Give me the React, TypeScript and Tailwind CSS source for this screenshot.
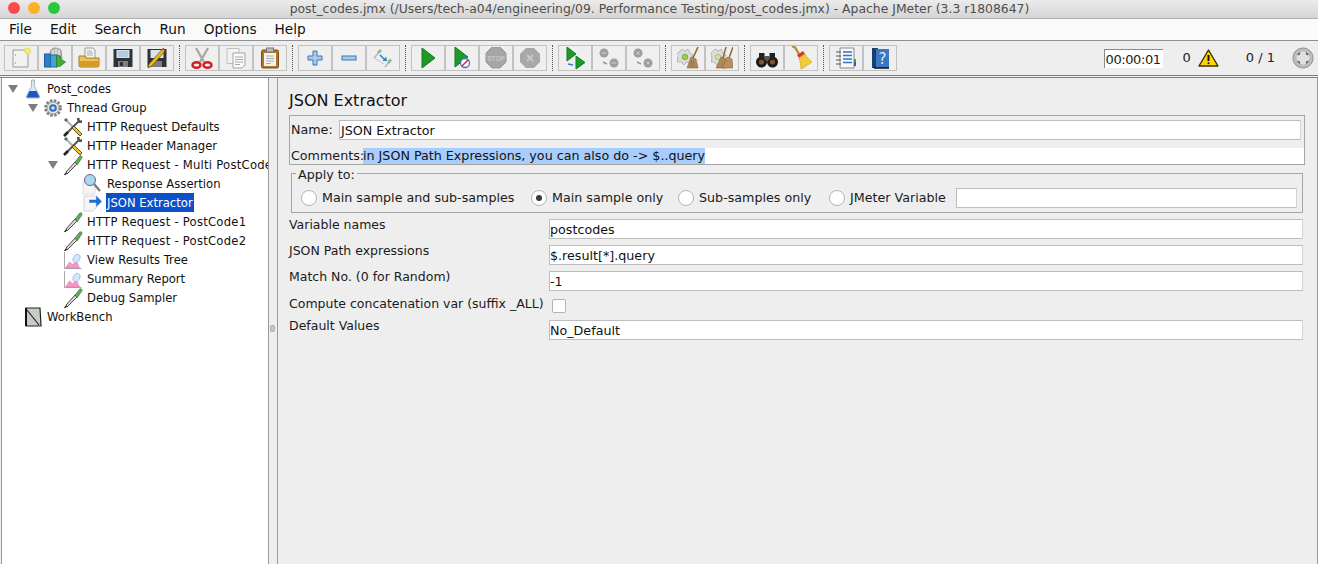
import React from "react";

const F = { fontFamily: '"DejaVu Sans", Verdana, sans-serif' };

type C = { children?: React.ReactNode };
const S = ({ children, w = 22, h = 22 }: C & { w?: number; h?: number }) => (
  <svg width={w} height={h} viewBox={`0 0 ${w} ${h}`} className="block shrink-0">{children}</svg>
);

const New = () => <S><path d="M3 3h13l2 2v15H3z" fill="#f2f2f0" stroke="#9a9a9a" /><circle cx="17.500" cy="4" r="3" fill="#f8e77f" stroke="#e6d04f" strokeWidth=".7" /><circle cx="5.500" cy="8" r=".7" fill="#999" /><circle cx="5.500" cy="16" r=".7" fill="#999" /></S>;
const Templates = () => <S><path d="M6 7c0-5 3-6 5-6s5 1 6 2l1 9H6z" fill="#bdbdbd" stroke="#8a8a8a" strokeWidth=".8" /><path d="M9 3v5M12 2v6M15 3v5" stroke="#eee" /><rect x="0.500" y="7" width="6" height="13" fill="#2f7fc8" stroke="#1c5d99" /><rect x="6.500" y="8" width="6" height="12" fill="#48a0dc" stroke="#1c6d99" /><path d="M12.500 8l4 1v3l5 3-5 4-4 1z" fill="#3fae3a" stroke="#2b7d28" strokeWidth=".8" /></S>;
const Open = () => <S><path d="M7 1h8l2 2v9H7z" fill="#f5f5f5" stroke="#999" /><path d="M9 4h5M9 6h6M9 8h6" stroke="#aaa" /><path d="M1 9h6l1 2h13v8l-1 1H2l-1-1z" fill="#eec15b" stroke="#a87a1c" /><path d="M1.500 14h19v5.500h-19z" fill="#d69c2a" /></S>;
const Save = () => <S><path d="M1.500 2h19v18h-19z" fill="#2f3236" /><rect x="4.500" y="3" width="13" height="8" fill="#cfe0f2" /><path d="M6 5h10M6 7h10M6 9h10" stroke="#7f9fc0" strokeWidth=".7" /><rect x="6" y="14" width="10" height="6" fill="#7c8086" /><rect x="8" y="15" width="3" height="4" fill="#2f3236" /></S>;
const SaveAs = () => <S><path d="M1.500 2h19v18h-19z" fill="#2f3236" /><rect x="4.500" y="3" width="13" height="8" fill="#d8e4ef" /><rect x="6" y="14" width="10" height="6" fill="#7c8086" /><path d="M19 4L6 19l-4 2 1-4L17 1.500z" fill="#eeb71e" stroke="#6a4a05" strokeWidth=".7" /><path d="M17 1.500l2.200 2.300" stroke="#c22" strokeWidth="1.600" /></S>;
const Cut = () => <S><path d="M5 1l8 14M17 1L9 15" stroke="#a9a9a9" strokeWidth="2.400" /><ellipse cx="5.500" cy="18" rx="4" ry="2.800" fill="none" stroke="#d21f1f" strokeWidth="2.400" /><ellipse cx="16.500" cy="18" rx="4" ry="2.800" fill="none" stroke="#d21f1f" strokeWidth="2.400" /></S>;
const Copy = () => <S><path d="M2 1.500h12v15H2z" fill="#f2f2f2" stroke="#c0c0c0" /><path d="M8 6h12v12l-3 3H8z" fill="#f9f9f9" stroke="#a5a5a5" /><path d="M10 10h8M10 12.500h8M10 15h8M10 17.500h5" stroke="#a9a9a9" /></S>;
const Paste = () => <S><rect x="2.500" y="3" width="17" height="18" rx="1.500" fill="#b07526" stroke="#7b4c14" /><rect x="5" y="6" width="12" height="13" fill="#f4f4f4" /><rect x="7.500" y="1" width="7" height="4" fill="#bcbcbc" stroke="#777" /><path d="M7 9h8M7 11.500h8M7 14h8M7 16.500h5" stroke="#aaa" /></S>;
const Plus = () => <S><path d="M9 4h4v5h5v4h-5v5H9v-5H4V9h5z" fill="#a9c9ec" stroke="#3f74b2" /></S>;
const Minus = () => <S><rect x="4" y="9" width="14" height="4" fill="#a9c9ec" stroke="#3f74b2" /></S>;
const Toggle = () => <S><path d="M2 11l6-7" stroke="#bcbcbc" strokeWidth="1.800" /><path d="M6 6l3-3" stroke="#8fbf85" strokeWidth="2.800" /><path d="M13 20l5-6" stroke="#bcbcbc" strokeWidth="1.800" /><path d="M16 16l3-3.500" stroke="#8fbf85" strokeWidth="2.800" /><path d="M2 11l10 6" stroke="#aab" strokeWidth=".7" /><path d="M8 8l4 4" stroke="#2f7fd0" strokeWidth="1.600" /><path d="M10.500 14l4.500 0-1-4.500z" fill="#2f7fd0" /></S>;
const Play = () => <S><path d="M5 1l13 10L5 21z" fill="#1d9a27" stroke="#137a1c" /></S>;
const PlayNo = () => <S><path d="M4 0l13 10L4 20z" fill="#1d9a27" stroke="#137a1c" /><circle cx="14" cy="16" r="4.500" fill="#fff" stroke="#3f74d2" strokeWidth="1.300" /><path d="M11 19l6-6" stroke="#d22" strokeWidth="1.400" /></S>;
const Stop = () => <S><path d="M7 0h8l6 6v9l-6 6H7l-6-6V6z" fill="#a6a6a6" stroke="#9a9a9a" /><text x="11" y="13.500" textAnchor="middle" fontSize="6.500" fontWeight="700" fill="#c6c6c6" fontFamily="Liberation Sans">STOP</text></S>;
const Shut = () => <S><path d="M7 1h8l6 6v8l-6 6H7l-6-6V7z" fill="#a8a8a8" /><path d="M8 8l6 6M14 8l-6 6" stroke="#c8c8c8" strokeWidth="2" /></S>;
const RemoteStart = () => <S><path d="M3 0l9 7-9 7z" fill="#1d9a27" stroke="#137a1c" /><path d="M12 9l9 6.500-9 6.500z" fill="#1d9a27" stroke="#137a1c" /><path d="M4 17l5 1" stroke="#2f7fd0" strokeWidth="1.600" fill="none" /></S>;
const RemoteGray = ({ x }: { x?: boolean }) => <S><circle cx="6" cy="6" r="4.500" fill="#9e9e9e" /><circle cx="16" cy="16" r="4.500" fill="#9e9e9e" /><path d="M5 15l4 2" stroke="#999" strokeWidth="1.500" fill="none" />{x && <path d="M4.500 4.500l3 3M7.500 4.500l-3 3M14.500 14.500l3 3M17.500 14.500l-3 3" stroke="#cfcfcf" />}{!x && <path d="M3.500 6h5M13.500 16h5" stroke="#cfcfcf" />}</S>;
const Broom = () => <S><path d="M1 6l4-4 3 2 3-2 2 4 3 2-2 4 1 4-5-1-3 3-3-3-4 0 1-4-2-3z" fill="#dcdcdc" stroke="#b4b4b4" /><circle cx="8" cy="10" r="2.800" fill="#9ccc50" stroke="#6c9a30" strokeWidth=".7" /><path d="M21 0l-5 11" stroke="#8a6a3a" strokeWidth="1.600" /><path d="M14 10l5 2 2 9-11 0z" fill="#b0875a" stroke="#8c6638" strokeWidth=".6" /><path d="M13 20l2-7M16 20l1-7" stroke="#8c6638" strokeWidth=".6" /></S>;
const Broom2 = () => <S><path d="M0 6l4-4 3 2 3-2 2 4 3 2-2 4 1 4-5-1-3 3-3-3-3 0 1-4-1-3z" fill="#dcdcdc" stroke="#b4b4b4" /><circle cx="7" cy="10" r="2.800" fill="#cfe0a0" stroke="#a0b070" strokeWidth=".7" /><path d="M15 0l-3 11M22 0l-4 11" stroke="#8a6a3a" strokeWidth="1.500" /><path d="M10 10l5 2 1 9H5z" fill="#b0875a" stroke="#8c6638" strokeWidth=".6" /><path d="M16 10l5 2 1 9H11z" fill="#b98f60" stroke="#8c6638" strokeWidth=".6" /></S>;
const Binoc = () => <S><circle cx="5.500" cy="15" r="5.500" fill="#1b1b1b" /><circle cx="16.500" cy="15" r="5.500" fill="#1b1b1b" /><circle cx="5.500" cy="15" r="2.600" fill="#8a5028" /><circle cx="16.500" cy="15" r="2.600" fill="#8a5028" /><rect x="3" y="6" width="5.500" height="7" fill="#222" /><rect x="13.500" y="6" width="5.500" height="7" fill="#222" /><rect x="8.500" y="9" width="5" height="4" fill="#555" /></S>;
const Sweep = () => <S w={24} h={24}><path d="M3 1c2-1 3 0 4 2l3 5" stroke="#b98a3a" strokeWidth="2.400" fill="none" /><path d="M8 9l6-4 2 3-6 4z" fill="#d63a2a" /><path d="M10 12l6-4c2 4 5 6 7 8-4 3-9 6-11 7 0-4-1-8-2-11z" fill="#f3cb38" stroke="#d7a51f" strokeWidth=".7" /></S>;
const List = () => <S><path d="M5 1h14v20H5z" fill="#f8f8f8" stroke="#888" /><path d="M8 5h9M8 8.500h9M8 12h9M8 15.500h9" stroke="#3672c4" strokeWidth="1.300" /><path d="M1 5h5M1 9h5M1 13h5M1 17h5" stroke="#555" strokeWidth="1.200" /><rect x="19" y="12" width="2" height="3" fill="#3a2" /><rect x="19" y="15" width="2" height="4" fill="#26b" /></S>;
const Help = () => <S><path d="M3 1h6v20H3z" fill="#17406e" /><path d="M7 2h13v19H7z" fill="#3b78c2" /><path d="M5 21h15" stroke="#111" strokeWidth="1.500" /><text x="13.500" y="17" textAnchor="middle" fontSize="15" fill="#dbe9fa" fontFamily="DejaVu Sans">?</text></S>;

const Flask = () => <S w={18} h={20}><path d="M7.500 1h3v6l5 10c.5 1.500-.5 2-1.500 2H4c-1 0-2-.5-1.500-2l5-10z" fill="#dfe6ef" stroke="#9aa7b8" strokeWidth=".8" /><path d="M5.500 12h7L15.500 18.500H2.500z" fill="#1957c4" /></S>;
const Gear = () => <S w={20} h={20}><circle cx="10" cy="10" r="7.500" fill="#d9d9d9" stroke="#7c7c7c" strokeWidth="2.600" strokeDasharray="2.400 1.600" /><circle cx="10" cy="10" r="5.800" fill="#e5e5e5" stroke="#999" strokeWidth=".7" /><circle cx="10" cy="10" r="3.800" fill="#2f6fb9" /><circle cx="10" cy="10" r="1.800" fill="#cfe0f5" /></S>;
const Wrench = () => <S w={20} h={20}><path d="M2 2l9 9" stroke="#b4b4b4" strokeWidth="2.200" /><path d="M1 3l2-2 2 2-2 2z" fill="#666" /><path d="M17 3L3 17" stroke="#555" strokeWidth="2" /><path d="M11 9l8 8-2 2-8-8z" fill="#efc01f" stroke="#3f3304" strokeWidth=".8" /><path d="M14 1l3 0-1 2 1 1 2-1 0 3-3 0-2-3z" fill="#555" /><path d="M1 19l4-4" stroke="#222" strokeWidth="2.600" /></S>;
const Pipette = () => <S w={20} h={20}><path d="M3 17l9-10 2 2-10 10z" fill="#dadada" stroke="#333" strokeWidth=".9" /><path d="M12 7l4-5c1-2 3-1 3 0s-.5 2-1.500 3L14 10z" fill="#66a75f" stroke="#3b7936" strokeWidth=".7" /><path d="M1.500 20l2-2" stroke="#222" strokeWidth="1.500" /></S>;
const Magnifier = () => <S w={22} h={22}><path d="M1 9h12v12H1z" fill="#f4f4f4" stroke="#dfdfdf" /><circle cx="8" cy="7" r="5.500" fill="#a9d8f5" stroke="#6b6b6b" /><path d="M12 11l6 7" stroke="#7c7c7c" strokeWidth="2.400" /></S>;
const Extractor = () => <S w={22} h={22}><path d="M2 4h12v12l-3 3H2z" fill="#f6f6f6" stroke="#d4d4d4" /><path d="M7 7.500h7V3l6 6.500-6 6V11H7z" fill="#1f6fd0" stroke="#fff" strokeWidth=".5" /></S>;
const Graph = () => <S w={20} h={20}><path d="M1.500 2v16.500h17" stroke="#a8a8a8" fill="none" /><path d="M2.500 18l4-6 3 2.500 4-3 3 6.500z" fill="#f29ac4" stroke="#d86aa4" strokeWidth=".5" /><ellipse cx="13.500" cy="8.500" rx="3.200" ry="4.500" fill="#d3e6fb" stroke="#8fb4de" strokeWidth=".7" transform="rotate(25 13.500 8.500)" /></S>;
const Workbench = () => <S w={20} h={20}><path d="M3 1h14l1 18H3z" fill="#c5cdc5" stroke="#222" strokeWidth="1.200" /><path d="M4 3l12 15" stroke="#222" strokeWidth="1.200" /><path d="M3 1v18" stroke="#111" strokeWidth="2" /></S>;

const Caret = () => <span className="w-0 h-0 border-l-[5px] border-r-[5px] border-t-[8px] border-l-transparent border-r-transparent border-t-[#7e7e7e]" />;

type Node = { d: number; t: string; I: React.FC; open?: boolean; sel?: boolean; track?: boolean };
const nodes: Node[] = [
  { d: 0, t: "Post_codes", I: Flask, open: true },
  { d: 1, t: "Thread Group", I: Gear, open: true },
  { d: 2, t: "HTTP Request Defaults", I: Wrench },
  { d: 2, t: "HTTP Header Manager", I: Wrench },
  { d: 2, t: "HTTP Request - Multi PostCodes", I: Pipette, open: true, track: true },
  { d: 3, t: "Response Assertion", I: Magnifier },
  { d: 3, t: "JSON Extractor", I: Extractor, sel: true },
  { d: 2, t: "HTTP Request - PostCode1", I: Pipette, track: true },
  { d: 2, t: "HTTP Request - PostCode2", I: Pipette, track: true },
  { d: 2, t: "View Results Tree", I: Graph },
  { d: 2, t: "Summary Report", I: Graph },
  { d: 2, t: "Debug Sampler", I: Pipette },
  { d: 0, t: "WorkBench", I: Workbench },
];
const pad = ["pl-[3px]", "pl-[23px]", "pl-[43px]", "pl-[63px]"];

const TreeRow = ({ n }: { n: Node }) => (
  <div className={`h-[19px] flex items-center whitespace-nowrap ${pad[n.d]}`}>
    <span className="w-[15px] flex justify-center shrink-0">{n.open && <Caret />}</span>
    <span className="w-[26px] h-[19px] flex items-center justify-center shrink-0"><n.I /></span>
    <span className={`h-[19px] leading-[20px] px-px ${n.sel ? "bg-[#0b50c9] text-white" : "text-[#111]"} ${n.track ? "tracking-[0.25px]" : ""}`}>{n.t}</span>
  </div>
);

const groups: React.ReactNode[][] = [
  [<New />, <Templates />, <Open />, <Save />, <SaveAs />],
  [<Cut />, <Copy />, <Paste />],
  [<Plus />, <Minus />, <Toggle />],
  [<Play />, <PlayNo />, <Stop />, <Shut />],
  [<RemoteStart />, <RemoteGray />, <RemoteGray x />],
  [<Broom />, <Broom2 />],
  [<Binoc />, <Sweep />],
  [<List />, <Help />],
];

const Radio = ({ label, on, w }: { label: string; on?: boolean; w: string }) => (
  <label className={`flex items-center shrink-0 ${w}`}>
    <span className="w-[16px] h-[16px] rounded-full bg-white border border-[#b4b4b4] flex items-center justify-center shrink-0 mr-[5px]">
      {on && <span className="w-[6px] h-[6px] rounded-full bg-[#3a3a3a]" />}
    </span>
    <span className="whitespace-nowrap">{label}</span>
  </label>
);

const Input = ({ v, className = "" }: { v?: string; className?: string }) => (
  <div className={`h-[20px] bg-white border border-[#bdbdbd] border-r-[#d4d4d4] leading-[20px] text-[#111] whitespace-nowrap ${className}`}>{v}</div>
);

const Row = ({ label, v, mt }: { label: string; v: string; mt: string }) => (
  <div className={`flex ${mt}`}>
    <span className="w-[260px] shrink-0 whitespace-nowrap leading-[11px] text-[12.500px]">{label}</span>
    <Input v={v} className="flex-1" />
  </div>
);

export default function App() {
  return (
    <div style={F} className="w-[1318px] h-[564px] overflow-hidden flex flex-col bg-[#eeeeee] text-[12px] text-[#1a1a1a]">
      <div className="h-[19px] shrink-0 relative flex items-center justify-center bg-gradient-to-b from-[#ebebeb] to-[#d5d5d5] border-b border-[#b0b0b0] text-[#4e4e4e] text-[12.4px] leading-[18px]">
        <div className="absolute left-[8px] top-[2px] flex gap-[8px]">
          <span className="w-[12px] h-[12px] rounded-full bg-[#fc4a4d]" />
          <span className="w-[12px] h-[12px] rounded-full bg-[#fdb124]" />
          <span className="w-[12px] h-[12px] rounded-full bg-[#2ac73f]" />
        </div>
        <span className="pl-[1px]">post_codes.jmx (/Users/tech-a04/engineering/09. Performance Testing/post_codes.jmx) - Apache JMeter (3.3 r1808647)</span>
      </div>
      <div className="h-[22px] shrink-0 bg-[#fafafa] border-b border-[#8f8f8f] flex items-center pl-[9px] text-[13.7px] text-[#111] gap-[18px]">
        {["File", "Edit", "Search", "Run", "Options", "Help"].map((m) => <span key={m}>{m}</span>)}
      </div>
      <div className="h-[34px] shrink-0 flex items-center pl-[4px] pr-[4px] text-[#222]">
        {groups.map((g, i) => (
          <React.Fragment key={i}>
            {i > 0 && <span className="w-0 h-[26px] border-l border-dotted border-[#555] mx-[5px]" />}
            <div className="flex">
              {g.map((ic, j) => (
                <div key={j} className="w-[34px] h-[26px] border border-[#c2c2c2] bg-[#efefef] flex items-center justify-center">{ic}</div>
              ))}
            </div>
          </React.Fragment>
        ))}
        <div className="ml-auto flex items-center">
          <div className="w-[59px] h-[19px] bg-white border-t border-l border-[#8a8a8a] leading-[19px] pl-[1px] text-[13px] tracking-[-0.4px]">00:00:01</div>
          <span className="ml-[20px] text-[13px]">0</span>
          <svg width="21" height="20" viewBox="0 0 21 20" className="ml-[7px]"><path d="M10.500 2L20 18H1z" fill="#ffd20a" stroke="#3d3200" strokeWidth="1.400" strokeLinejoin="round" /><path d="M10.500 7v6" stroke="#111" strokeWidth="2" /><circle cx="10.500" cy="15.300" r="1" fill="#111" /></svg>
          <span className="ml-[27px] text-[13px] whitespace-pre">0 / 1</span>
          <svg width="22" height="22" viewBox="0 0 24 24" className="ml-[17px]"><circle cx="12" cy="12" r="11" fill="#bdbdbd" stroke="#8a8a8a" /><circle cx="12" cy="12" r="7" fill="#e0e0e0" /><path d="M8.500 5.500l-3 3 2 .5 1.500-1.500zM15.500 5.500l3 3-2 .5-1.500-1.500zM8.500 18.500l-3-3 2-.5 1.500 1.500zM15.500 18.500l3-3-2-.5-1.500 1.500z" fill="#5c5c5c" /></svg>
        </div>
      </div>
      <div className="h-[3px] shrink-0 border-t border-b border-[#7d7d7d] bg-[#f5f5f5]" />
      <div className="flex-1 flex min-h-0">
        <div className="w-[268px] ml-px shrink-0 bg-white border-l border-r border-[#9a9a9a] pt-[1px] overflow-hidden text-[11.600px]">
          {nodes.map((n) => <TreeRow key={n.t} n={n} />)}
        </div>
        <div className="w-[8px] shrink-0 flex items-center justify-center">
          <span className="w-[5px] h-[7px] bg-[#c9c9c9] border border-[#aaa] rounded-[2px] relative top-[7px] left-[-1px]" />
        </div>
        <div className="flex-1 border-l border-r border-[#9a9a9a] pl-[11px] pr-[14px] text-[12.700px]">
          <div className="text-[16px] leading-[19px] pt-[13px] box-content text-[#111]">JSON Extractor</div>
          <div className="mt-[5px] mr-[-2px] border border-[#a5a5a5] h-[50px] flex flex-col">
            <div className="flex mt-[4px] pr-[3px] pl-[1px]">
              <span className="w-[48px] leading-[20px] shrink-0">Name:</span>
              <Input v="JSON Extractor" className="flex-1 pl-[1px]" />
            </div>
            <div className="flex mt-[8px] pl-[1px] h-[16px]">
              <span className="w-[72px] leading-[16px] shrink-0 whitespace-nowrap">Comments:</span>
              <div className="flex-1 bg-white leading-[16px]"><span className="inline-block bg-[#a6cdfd] h-[16px] text-[#111]">in JSON Path Expressions, you can also do -&gt; $..query</span></div>
            </div>
          </div>
          <div className="relative mt-[8px] ml-[2px] h-[40px] border border-[#a5a5a5] flex items-center pl-[9px] pr-[5px] pt-[12px] pb-[2px]">
            <span className="absolute left-[4px] top-[-7px] bg-[#eeeeee] px-[2px] leading-[15px]">Apply to:</span>
            <Radio label="Main sample and sub-samples" w="w-[230px]" />
            <Radio label="Main sample only" on w="w-[147px]" />
            <Radio label="Sub-samples only" w="w-[151px]" />
            <Radio label="JMeter Variable" w="w-[127px]" />
            <Input className="flex-1" />
          </div>
          <Row label="Variable names" v="postcodes" mt="mt-[6px]" />
          <Row label="JSON Path expressions" v="$.result[*].query" mt="mt-[6px]" />
          <Row label="Match No. (0 for Random)" v="-1" mt="mt-[6px]" />
          <div className="flex mt-[6px] h-[23px]">
            <span className="w-[263px] shrink-0 whitespace-nowrap leading-[13px] text-[12.500px]">Compute concatenation var (suffix _ALL)</span>
            <span className="w-[14px] h-[14px] mt-[2px] bg-white border border-[#b4b4b4] rounded-[2px]" />
          </div>
          <Row label="Default Values" v="No_Default" mt="mt-0" />
        </div>
      </div>
    </div>
  );
}
